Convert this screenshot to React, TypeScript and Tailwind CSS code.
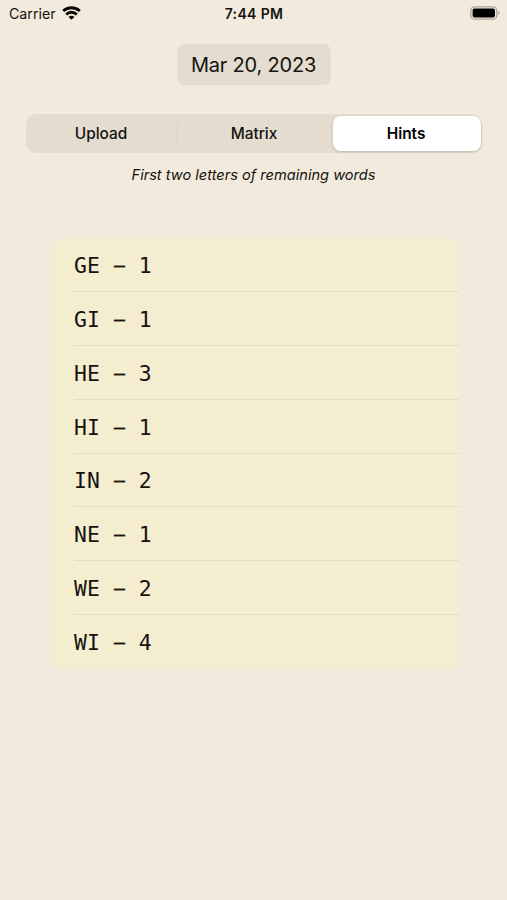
import { useState } from "react";

const tabs = ["Upload", "Matrix", "Hints"];

const hints = [
    { letters: "GE", count: 1 },
    { letters: "GI", count: 1 },
    { letters: "HE", count: 3 },
    { letters: "HI", count: 1 },
    { letters: "IN", count: 2 },
    { letters: "NE", count: 1 },
    { letters: "WE", count: 2 },
    { letters: "WI", count: 4 },
];

function StatusBar() {
    return (
        <div className="grid grid-cols-3 items-center h-7 pl-[9px] pr-[7px] text-[14.2px] leading-7">
            <div className="flex items-center gap-[6px]">
                <span>Carrier</span>
                <svg className="-mt-[2px]" width="19" height="14" viewBox="0 0 19 14" fill="none" stroke="#0b0a08" strokeWidth="2.8">
                    <path d="M1.2 5.1C5.8 0.6 13.2 0.6 17.8 5.1" />
                    <path d="M4.2 8.4C7.2 5.5 11.8 5.5 14.8 8.4" />
                    <path d="M9.5 13.8L6.6 10.9C8.2 9.4 10.8 9.4 12.4 10.9Z" fill="#0b0a08" stroke="none" />
                </svg>
            </div>
            <div className="text-center font-semibold text-[14px] tracking-[0.35px] -ml-px">7:44 PM</div>
            <div className="flex justify-end">
                <svg className="-mt-[2px]" width="30" height="14" viewBox="0 0 30 14" fill="none">
                    <rect x="0.8" y="0.8" width="26" height="12.4" rx="3.8" stroke="#aaa59a" strokeWidth="1.3" />
                    <rect x="2.6" y="2.6" width="22.4" height="8.8" rx="2" fill="#000" />
                    <path d="M28.2 5C29.8 5.6 29.8 8.4 28.2 9Z" fill="#aaa59a" />
                </svg>
            </div>
        </div>
    );
}

export default function App() {
    const [activeTab, setActiveTab] = useState("Hints");

    return (
        <div className="h-[900px] bg-[#f2eadd] text-[#15130f] font-[Inter,sans-serif] overflow-hidden">
            <StatusBar />

            <div className="flex justify-center pt-4">
                <button className="w-[154px] h-[41px] pt-px rounded-[8px] bg-[#e3dccf] text-[20px] tracking-[-0.2px] whitespace-nowrap">
                    Mar 20, 2023
                </button>
            </div>

            <div className="grid grid-cols-[151px_154px_149px] items-center mt-[29px] ml-[26px] w-[456px] h-[39px] py-[2px] pr-[2px] rounded-[10px] bg-[#e3dccf]">
                {tabs.map((tab, index) => (
                    <div key={tab} className="flex items-center h-full">
                        {index === 1 && <div className="w-px h-[21px] bg-[#d6cfc2]"></div>}
                        <button
                            onClick={() => setActiveTab(tab)}
                            className={
                                activeTab === tab
                                    ? "flex-1 ml-[2px] -mr-px pt-px pr-[2px] h-[35px] rounded-[8px] bg-white text-black text-[15.4px] leading-[22px] font-semibold shadow-[0_1px_3px_rgba(0,0,0,0.16)]"
                                    : "flex-1 h-full pt-px pr-px text-[15.4px] leading-[22px] font-medium"
                            }
                        >
                            {tab}
                        </button>
                    </div>
                ))}
            </div>

            <p className="mt-[11px] text-center italic text-[14.6px] leading-[22px]">
                First two letters of remaining words
            </p>

            <div className="mt-[52.5px] ml-[51px] w-[408px] rounded-[12px] bg-[#f4edcf] font-['DejaVu_Sans_Mono',monospace]">
                {hints.map((hint) => (
                    <div key={hint.letters} className="pl-[23px] group">
                        <div className="h-[53.75px] flex items-center gap-[13px] border-b border-[#e3dcc1] group-last:border-b-0 text-[21.4px] pt-[3px]">
                            <span>{hint.letters}</span>
                            <span className="scale-x-85 -translate-y-px [-webkit-text-stroke:0.4px]">–</span>
                            <span>{hint.count}</span>
                        </div>
                    </div>
                ))}
            </div>
        </div>
    );
}
